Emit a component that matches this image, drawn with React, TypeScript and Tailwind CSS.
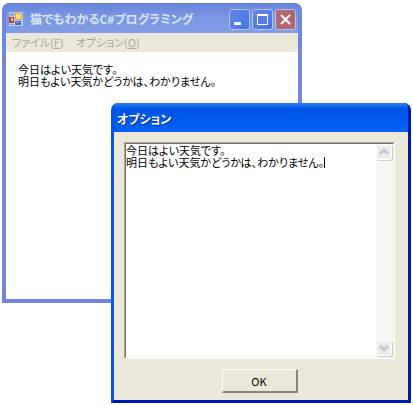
import { useState } from 'react';
import type { ReactNode } from 'react';

const TEXT = '今日はよい天気です。\n明日もよい天気かどうかは、わかりません。';

function AppIcon() {
  return (
    <svg viewBox="0 0 16 16" className="h-4 w-4 shrink-0" aria-hidden="true" shapeRendering="crispEdges">
      <rect x="1" y="1" width="14" height="14" fill="#c3cbe0" />
      <rect x="2" y="2" width="4" height="3" fill="#8fa6de" />
      <rect x="1" y="6" width="5" height="6" fill="#a8483f" />
      <rect x="3" y="7" width="2" height="3" fill="#e9b4a4" />
      <rect x="2" y="13" width="4" height="1" fill="#8fa6de" />
      <rect x="7" y="2" width="7" height="7" fill="#e0a93a" />
      <rect x="8" y="3" width="5" height="5" fill="#ffdc7c" />
      <rect x="7" y="10" width="6" height="4" fill="#3f66d6" />
      <rect x="8" y="11" width="3" height="1" fill="#86a5f2" />
    </svg>
  );
}

function CaptionButton({ label, danger, children }: { label: string; danger?: boolean; children: ReactNode }) {
  return (
    <button
      type="button"
      aria-label={label}
      className={`h-[21px] w-[21px] shrink-0 rounded-[3px] border border-[#b4c4ee] ${danger ? 'bg-[#b0686e]' : 'bg-linear-to-br from-[#6288e6] to-[#4672e6]'}`}
    >
      <svg viewBox="0 0 19 19" className="block h-full w-full" fill="none" stroke="white" shapeRendering="crispEdges">
        {children}
      </svg>
    </button>
  );
}

function ScrollButton({ label, d }: { label: string; d: string }) {
  return (
    <button type="button" aria-label={label} className="h-4 w-4 rounded-[2px] border border-white bg-[#eeede5] shadow-[1px_1px_0_#c5cde0]">
      <svg viewBox="0 0 14 14" className="block h-full w-full" fill="none" stroke="#bfc7dc" strokeWidth="3">
        <path d={d} />
      </svg>
    </button>
  );
}

export default function App() {
  const [text, setText] = useState(TEXT);

  return (
    <main className="relative h-screen overflow-hidden bg-white font-['Noto_Sans_CJK_JP',sans-serif] text-[11px] leading-3 text-black [font-feature-settings:'palt']">
      <section className="absolute top-[3px] right-[111px] bottom-[102px] left-[2px] flex flex-col rounded-t-[7px] border-x-4 border-b-4 border-[#6f87dc] bg-[#7b98e2] shadow-[inset_0_1px_0_#5f7fd8]">
        <header className="flex h-[30px] shrink-0 items-center gap-1 rounded-t-[4px] bg-linear-to-b from-[#6484da] via-[#7b98e2] to-[#7f9ce6] px-[2px] pt-[2px]">
          <AppIcon />
          <h1 className="flex-1 pl-[2px] text-xs font-bold whitespace-nowrap text-[#dbe5fb]">猫でもわかるC#プログラミング</h1>
          <div className="flex gap-[2px]">
            <CaptionButton label="最小化"><path d="M4 13.5h7" strokeWidth="3" /></CaptionButton>
            <CaptionButton label="最大化"><path d="M4 5.5h11M4.5 4v11M14.5 4v11M4 14.5h11" /><path d="M4 5h11" strokeWidth="2" /></CaptionButton>
            <CaptionButton label="閉じる" danger><path d="M5 5l9 9M14 5l-9 9" strokeWidth="2" shapeRendering="auto" /></CaptionButton>
          </div>
        </header>
        <nav className="flex h-[19px] shrink-0 items-center gap-3 bg-[#ebe8d9] px-[6px] pb-[2px] text-[#aca899]">
          <button type="button">ファイル(<u>F</u>)</button>
          <button type="button">オプション(<u>O</u>)</button>
        </nav>
        <p className="flex-1 bg-white px-3 py-[11px] whitespace-pre">{text}</p>
      </section>

      <section role="dialog" aria-labelledby="option-title" className="absolute top-[103px] right-[2px] bottom-[2px] left-[111px] flex flex-col rounded-t-[7px] border-x-[3px] border-b-[3px] border-l-[#0055ea] border-r-[#0019a8] border-b-[#0019a8] bg-[#0055ea]">
        <header className="flex h-[29px] shrink-0 items-center rounded-t-[4px] bg-linear-to-b from-[#2a80f4] via-[#0054e3] via-20% to-[#0062fa] px-[3px] pt-[2px]">
          <h2 id="option-title" className="text-xs font-bold text-white [text-shadow:1px_1px_0_#0a2a86]">オプション</h2>
        </header>
        <form className="flex min-h-0 flex-1 flex-col items-center gap-[10px] bg-[#ebe8d9] pt-[10px] pr-[13px] pb-[7px] pl-[10px]" onSubmit={(e) => e.preventDefault()}>
          <div className="relative flex min-h-0 w-full flex-1 border border-t-[#aca899] border-r-white border-b-white border-l-[#aca899] bg-white">
            <div className="flex min-w-0 flex-1 border border-t-[#716f64] border-r-[#f1efe2] border-b-[#f1efe2] border-l-[#716f64]">
              <textarea
                aria-label="オプション"
                value={text}
                onChange={(e) => setText(e.target.value)}
                className="min-w-0 flex-1 resize-none overflow-hidden outline-none"
              />
              <div className="flex w-[17px] flex-col justify-between bg-[#f8f7f3] pb-px">
                <ScrollButton label="上へ" d="M3 9l4-4 4 4" />
                <ScrollButton label="下へ" d="M3 5l4 4 4-4" />
              </div>
            </div>
            <span className="absolute top-[14px] left-[199px] h-[11px] w-px bg-black" />
          </div>
          <button type="submit" className="h-6 w-[76px] shrink-0 border-t border-r-2 border-b-2 border-l border-t-white border-r-[#8a8778] border-b-[#8a8778] border-l-white">OK</button>
        </form>
      </section>
    </main>
  );
}
